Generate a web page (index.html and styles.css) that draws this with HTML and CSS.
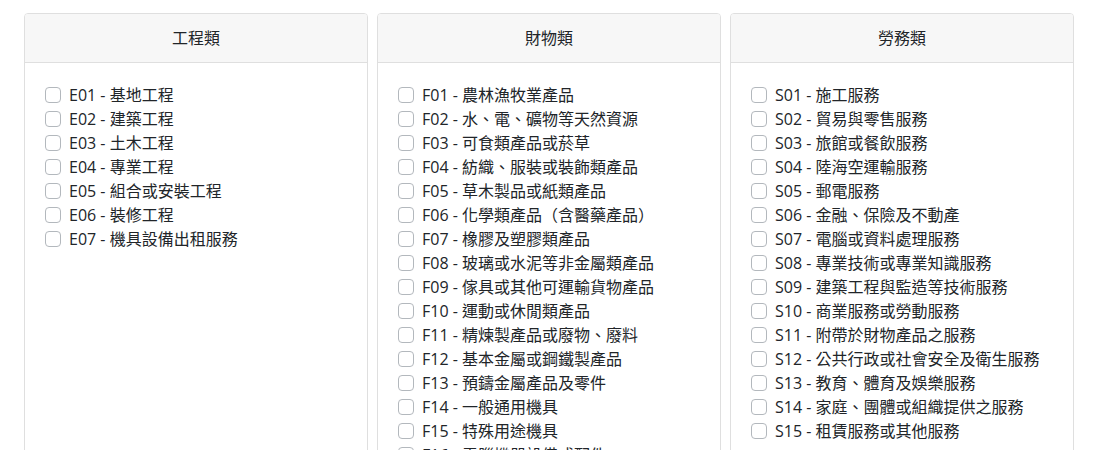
FILE: index.html
```html
<!DOCTYPE html>
<html lang="zh-Hant">
<head>
<meta charset="utf-8">
<title>採購類別</title>
<link rel="stylesheet" href="styles.css">
</head>
<body>
<div class="page">
  <div class="cards">
    <section class="card">
      <header class="card-header">工程類</header>
      <div class="card-body">
        <label class="check"><input type="checkbox"><span>E01 - 基地工程</span></label>
        <label class="check"><input type="checkbox"><span>E02 - 建築工程</span></label>
        <label class="check"><input type="checkbox"><span>E03 - 土木工程</span></label>
        <label class="check"><input type="checkbox"><span>E04 - 專業工程</span></label>
        <label class="check"><input type="checkbox"><span>E05 - 組合或安裝工程</span></label>
        <label class="check"><input type="checkbox"><span>E06 - 裝修工程</span></label>
        <label class="check"><input type="checkbox"><span>E07 - 機具設備出租服務</span></label>
      </div>
    </section>
    <section class="card">
      <header class="card-header">財物類</header>
      <div class="card-body">
        <label class="check"><input type="checkbox"><span>F01 - 農林漁牧業產品</span></label>
        <label class="check"><input type="checkbox"><span>F02 - 水、電、礦物等天然資源</span></label>
        <label class="check"><input type="checkbox"><span>F03 - 可食類產品或菸草</span></label>
        <label class="check"><input type="checkbox"><span>F04 - 紡織、服裝或裝飾類產品</span></label>
        <label class="check"><input type="checkbox"><span>F05 - 草木製品或紙類產品</span></label>
        <label class="check"><input type="checkbox"><span>F06 - 化學類產品（含醫藥產品）</span></label>
        <label class="check"><input type="checkbox"><span>F07 - 橡膠及塑膠類產品</span></label>
        <label class="check"><input type="checkbox"><span>F08 - 玻璃或水泥等非金屬類產品</span></label>
        <label class="check"><input type="checkbox"><span>F09 - 傢具或其他可運輸貨物產品</span></label>
        <label class="check"><input type="checkbox"><span>F10 - 運動或休閒類產品</span></label>
        <label class="check"><input type="checkbox"><span>F11 - 精煉製產品或廢物、廢料</span></label>
        <label class="check"><input type="checkbox"><span>F12 - 基本金屬或鋼鐵製產品</span></label>
        <label class="check"><input type="checkbox"><span>F13 - 預鑄金屬產品及零件</span></label>
        <label class="check"><input type="checkbox"><span>F14 - 一般通用機具</span></label>
        <label class="check"><input type="checkbox"><span>F15 - 特殊用途機具</span></label>
        <label class="check"><input type="checkbox"><span>F16 - 電腦機器設備或配件</span></label>
        <label class="check"><input type="checkbox"><span>F17 - 電力機具及其他電子設備</span></label>
      </div>
    </section>
    <section class="card">
      <header class="card-header">勞務類</header>
      <div class="card-body">
        <label class="check"><input type="checkbox"><span>S01 - 施工服務</span></label>
        <label class="check"><input type="checkbox"><span>S02 - 貿易與零售服務</span></label>
        <label class="check"><input type="checkbox"><span>S03 - 旅館或餐飲服務</span></label>
        <label class="check"><input type="checkbox"><span>S04 - 陸海空運輸服務</span></label>
        <label class="check"><input type="checkbox"><span>S05 - 郵電服務</span></label>
        <label class="check"><input type="checkbox"><span>S06 - 金融、保險及不動產</span></label>
        <label class="check"><input type="checkbox"><span>S07 - 電腦或資料處理服務</span></label>
        <label class="check"><input type="checkbox"><span>S08 - 專業技術或專業知識服務</span></label>
        <label class="check"><input type="checkbox"><span>S09 - 建築工程與監造等技術服務</span></label>
        <label class="check"><input type="checkbox"><span>S10 - 商業服務或勞動服務</span></label>
        <label class="check"><input type="checkbox"><span>S11 - 附帶於財物產品之服務</span></label>
        <label class="check"><input type="checkbox"><span>S12 - 公共行政或社會安全及衛生服務</span></label>
        <label class="check"><input type="checkbox"><span>S13 - 教育、體育及娛樂服務</span></label>
        <label class="check"><input type="checkbox"><span>S14 - 家庭、團體或組織提供之服務</span></label>
        <label class="check"><input type="checkbox"><span>S15 - 租賃服務或其他服務</span></label>
      </div>
    </section>
  </div>
</div>
</body>
</html>
```

FILE: styles.css
```css
html, body {
  margin: 0;
  padding: 0;
  overflow: hidden;
  background: #fff;
}

body {
  font-family: "Open Sans", "Noto Sans CJK TC", sans-serif;
  font-size: 16px;
  line-height: 24px;
  color: #212529;
}

.page {
  padding: 13px 28px 0 24px;
}

.cards {
  display: grid;
  grid-template-columns: repeat(3, 344px);
  column-gap: 9px;
}

.card {
  border: 1px solid #dfdfdf;
  border-radius: 4px;
  background: #fff;
  display: flex;
  flex-direction: column;
}

.card-header {
  background: #f7f7f7;
  border-bottom: 1px solid #dfdfdf;
  border-radius: 3px 3px 0 0;
  padding: 12px 20px;
  text-align: center;
}

.card-body {
  padding: 20px;
  display: flex;
  flex-direction: column;
}

.check {
  display: flex;
  align-items: center;
  gap: 8px;
  height: 24px;
  cursor: pointer;
  white-space: nowrap;
}

.check input {
  appearance: none;
  -webkit-appearance: none;
  margin: 0;
  width: 16px;
  height: 16px;
  flex: none;
  border: 1px solid #b3b8bd;
  border-radius: 4px;
  background: #fff;
}

.check span {
  position: relative;
  top: 0;
}
```
